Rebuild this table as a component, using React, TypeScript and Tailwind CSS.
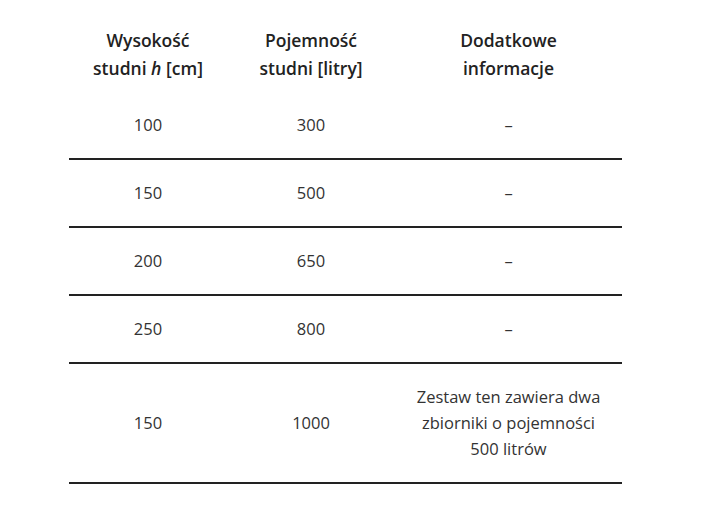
const rows = [
  { h: "100", v: "300", info: ["–"] },
  { h: "150", v: "500", info: ["–"] },
  { h: "200", v: "650", info: ["–"] },
  { h: "250", v: "800", info: ["–"] },
  { h: "150", v: "1000", info: ["Zestaw ten zawiera dwa", "zbiorniki o pojemności", "500 litrów"] },
];

export default function App() {
  return (
    <div className="min-h-screen bg-white pt-[20px] font-['Open_Sans',sans-serif]">
      <table className="ml-[69px] w-[553px] border-collapse text-center">
        <thead>
          <tr className="h-[72px] text-[17.5px] font-semibold leading-[28px] text-[#222]">
            <th className="w-[158px] pb-1 font-semibold">
              Wysokość
              <br />
              studni <i>h</i> [cm]
            </th>
            <th className="w-[168px] pb-1 font-semibold">
              Pojemność
              <br />
              studni [litry]
            </th>
            <th className="pb-1 font-semibold">
              Dodatkowe
              <br />
              informacje
            </th>
          </tr>
        </thead>
        <tbody className="text-[16.5px] leading-[26px] text-[#333]">
          {rows.map((r, i) => (
            <tr key={i} className="border-b-2 border-[#222]">
              <td className="py-[20px]">{r.h}</td>
              <td className="py-[20px]">{r.v}</td>
              <td className="py-[20px]">
                {r.info.map((l, j) => (
                  <div key={j}>{l}</div>
                ))}
              </td>
            </tr>
          ))}
        </tbody>
      </table>
    </div>
  );
}
